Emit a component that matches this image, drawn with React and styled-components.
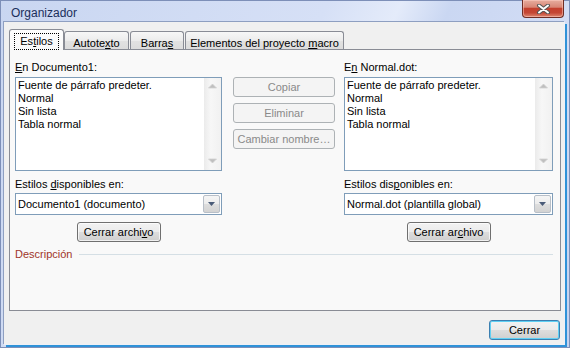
import styled, { createGlobalStyle } from 'styled-components';

const GlobalStyle = createGlobalStyle`
  html, body { margin: 0; padding: 0; }
  body {
    width: 570px;
    height: 348px;
    overflow: hidden;
    font-family: 'Liberation Sans', Arial, sans-serif;
    font-size: 11px;
    color: #000;
  }
  * { box-sizing: border-box; }
`

function ScrollArrow({ down }) {
  return (
    <svg width="9" height="6" viewBox="0 0 9 6">
      <polygon
        points={down ? '0.5,1 8.5,1 4.5,5' : '0.5,5 8.5,5 4.5,1'}
        fill="#bfbfbf"
        stroke="#d2d2d2"
        strokeWidth="0.8"
        strokeLinejoin="round"
      />
    </svg>
  );
}

function StyleList({ items }) {
  return (
    <ListBox>
      <Items>
        {items.map((it) => <Item key={it}>{it}</Item>)}
      </Items>
      <ScrollBar>
        <ScrollArrow />
        <ScrollArrow down />
      </ScrollBar>
    </ListBox>
  );
}

function Combo({ value }) {
  return (
    <ComboBox>
      <ComboText>{value}</ComboText>
      <DropButton>
        <svg width="7" height="4" viewBox="0 0 7 4">
          <polygon points="0,0 7,0 3.5,4" fill="#4a5b78" />
        </svg>
      </DropButton>
    </ComboBox>
  );
}

export default function App() {
  const styles = ['Fuente de párrafo predeter.', 'Normal', 'Sin lista', 'Tabla normal'];
  return (
    <>
      <GlobalStyle />
      <Window>
        <TitleBar>
          <Title>Organizador</Title>
          <CloseButton>
            <svg width="15" height="10" viewBox="0 0 15 10">
              <path d="M3 1.5 L12 8.5 M12 1.5 L3 8.5" stroke="#555" strokeWidth="4" strokeLinecap="round" />
              <path d="M3 1.5 L12 8.5 M12 1.5 L3 8.5" stroke="#fff" strokeWidth="2" strokeLinecap="round" />
            </svg>
          </CloseButton>
        </TitleBar>
        <Body>
          <TabStrip>
            <Tab $active $w={55}>
              <FocusRect>Es<Key>t</Key>ilos</FocusRect>
            </Tab>
            <Tab $w={65}><span>Autote<Key>x</Key>to</span></Tab>
            <Tab $w={54}><span>Barra<Key>s</Key></span></Tab>
            <Tab $w={159}><span>Elementos del proyecto <Key>m</Key>acro</span></Tab>
          </TabStrip>
          <Panel>
            <Columns>
              <Side>
                <Label><Key>E</Key>n Documento1:</Label>
                <StyleList items={styles} />
                <Label $top={7}>Estilos <Key>d</Key>isponibles en:</Label>
                <Combo value="Documento1 (documento)" />
                <Button $w={84}>Cerrar archi<Key>v</Key>o</Button>
              </Side>
              <Middle>
                <Button $w={102} disabled>Copiar</Button>
                <Button $w={102} disabled>Eliminar</Button>
                <Button $w={102} disabled>Cambiar nombre…</Button>
              </Middle>
              <Side>
                <Label>E<Key>n</Key> Normal.dot:</Label>
                <StyleList items={styles} />
                <Label $top={7}>Estilos dis<Key>p</Key>onibles en:</Label>
                <Combo value="Normal.dot (plantilla global)" />
                <Button $w={84}>Cerrar ar<Key>c</Key>hivo</Button>
              </Side>
            </Columns>
            <Description>
              <DescLabel>Descripción</DescLabel>
              <Rule />
            </Description>
          </Panel>
          <Footer>
            <Button $w={71} $default>Cerrar</Button>
          </Footer>
        </Body>
      </Window>
    </>
  );
}

const Window = styled.div`
  width: 570px;
  height: 348px;
  display: flex;
  flex-direction: column;
  border: 1px solid #7d8fb8;
  padding: 0 5px 3px 2px;
  background: linear-gradient(115deg, #c9d6f1 0%, #d6e0f6 45%, #e4ebfa 55%, #cad7f2 62%, #d3ddf5 80%, #c4d2ef 100%);
`
const TitleBar = styled.div`
  height: 20px;
  display: flex;
  align-items: flex-start;
`
const Title = styled.div`
  font-size: 12px;
  line-height: 14px;
  margin: 5px 0 0 8px;
  color: #1b2f5c;
`
const CloseButton = styled.div`
  margin-left: auto;
  width: 42px;
  height: 18px;
  margin-top: -1px;
  display: flex;
  align-items: center;
  justify-content: center;
  border: 1px solid #6e2d25;
  border-top: none;
  border-radius: 0 0 4px 4px;
  background: linear-gradient(#e7ad9f 0%, #d88676 42%, #c4402e 50%, #c44634 75%, #dd8670 100%);
  box-shadow: inset 0 0 0 1px rgba(255, 210, 200, 0.5);
`
const Body = styled.div`
  flex: 1;
  display: flex;
  flex-direction: column;
  background: #f0f0f0;
  border-top: 1px solid #8e9fc1;
  border-left: 1px solid #8e9fc1;
  padding: 7px 3px 0 5px;
  box-shadow: 1px 1px 0 #eef0f6, 3px 3px 0 #2f92d8;
`
const TabStrip = styled.div`
  height: 20px;
  display: flex;
  align-items: flex-end;
  gap: 1px;
`
const Tab = styled.div`
  position: relative;
  z-index: ${p => (p.$active ? 2 : 0)};
  width: ${p => p.$w}px;
  height: ${p => (p.$active ? 21 : 18)}px;
  margin-bottom: ${p => (p.$active ? -1 : 0)}px;
  margin-right: ${p => (p.$active ? -1 : 0)}px;
  display: flex;
  justify-content: center;
  align-items: flex-start;
  padding-top: ${p => (p.$active ? 3 : 5)}px;
  line-height: 13px;
  white-space: nowrap;
  border: 1px solid #898c95;
  border-bottom: none;
  border-radius: 3px 3px 0 0;
  background: ${p => (p.$active
    ? 'linear-gradient(#fdfdfd, #f9f9f9)'
    : 'linear-gradient(#f7f7f7 0%, #ececec 50%, #e2e2e2 51%, #dcdcdc 100%)')};
`
const FocusRect = styled.span`
  border: 1px dotted #000;
  padding: 1px 5px;
  line-height: 13px;
`
const Key = styled.span`
  text-decoration: underline;
`
const Panel = styled.div`
  width: 552px;
  height: 262px;
  border: 1px solid #898c95;
  background: #f9f9f9;
  padding: 11px 7px 0 5px;
  display: flex;
  flex-direction: column;
`
const Columns = styled.div`
  display: grid;
  grid-template-columns: 207px 122px 209px;
`
const Side = styled.div`
  display: flex;
  flex-direction: column;
  align-items: stretch;
  & > button {
    align-self: center;
    margin-top: 7px;
  }
`
const Middle = styled.div`
  display: flex;
  flex-direction: column;
  gap: 6px;
  padding: 16px 0 0 11px;
`
const Label = styled.div`
  line-height: 13px;
  margin: ${p => p.$top || 0}px 0 ${p => (p.$top ? 2 : 3)}px;
  white-space: nowrap;
`
const ListBox = styled.div`
  height: 94px;
  display: flex;
  background: #fff;
  border: 1px solid #7f9db9;
`
const Items = styled.div`
  flex: 1;
  padding: 1px 2px;
`
const Item = styled.div`
  line-height: 13px;
  white-space: nowrap;
`
const ScrollBar = styled.div`
  width: 17px;
  display: flex;
  flex-direction: column;
  justify-content: space-between;
  align-items: center;
  padding: 5px 0 6px;
  background: linear-gradient(to right, #ebebeb, #f7f7f7 40%, #f1f1f1);
`
const ComboBox = styled.div`
  height: 22px;
  display: flex;
  align-items: center;
  padding: 1px;
  background: #fff;
  border: 1px solid #7f9db9;
`
const ComboText = styled.div`
  flex: 1;
  padding-left: 1px;
  line-height: 13px;
  white-space: nowrap;
`
const DropButton = styled.div`
  width: 17px;
  height: 18px;
  display: flex;
  align-items: center;
  justify-content: center;
  border: 1px solid #b8bfc8;
  border-radius: 2px;
  background: linear-gradient(#f5f5f5 0%, #ececec 50%, #dedede 51%, #d3d3d3 100%);
`
const Button = styled.button`
  width: ${p => p.$w}px;
  height: 20px;
  padding: 0;
  font-family: 'Liberation Sans', Arial, sans-serif;
  font-size: 11px;
  line-height: 13px;
  white-space: nowrap;
  color: #000;
  border-radius: 3px;
  border: 1px solid ${p => (p.$default ? '#3c7fb1' : '#707070')};
  background: linear-gradient(#f2f2f2 0%, #ebebeb 50%, #dddddd 51%, #cfcfcf 100%);
  box-shadow: inset 0 0 0 1px ${p => (p.$default ? '#5fd0f4' : 'rgba(255,255,255,0.7)')};
  &:disabled {
    color: #8a8a8a;
    border-color: #adb2b5;
    background: #f4f4f4;
    box-shadow: none;
  }
`
const Description = styled.div`
  display: flex;
  align-items: center;
  margin-top: 6px;
  height: 13px;
`
const DescLabel = styled.div`
  line-height: 13px;
  color: #a0352a;
`
const Rule = styled.div`
  flex: 1;
  height: 1px;
  margin-left: 7px;
  background: #d5dfe5;
`
const Footer = styled.div`
  display: flex;
  justify-content: flex-end;
  padding: 9px 1px 0 0;
`
